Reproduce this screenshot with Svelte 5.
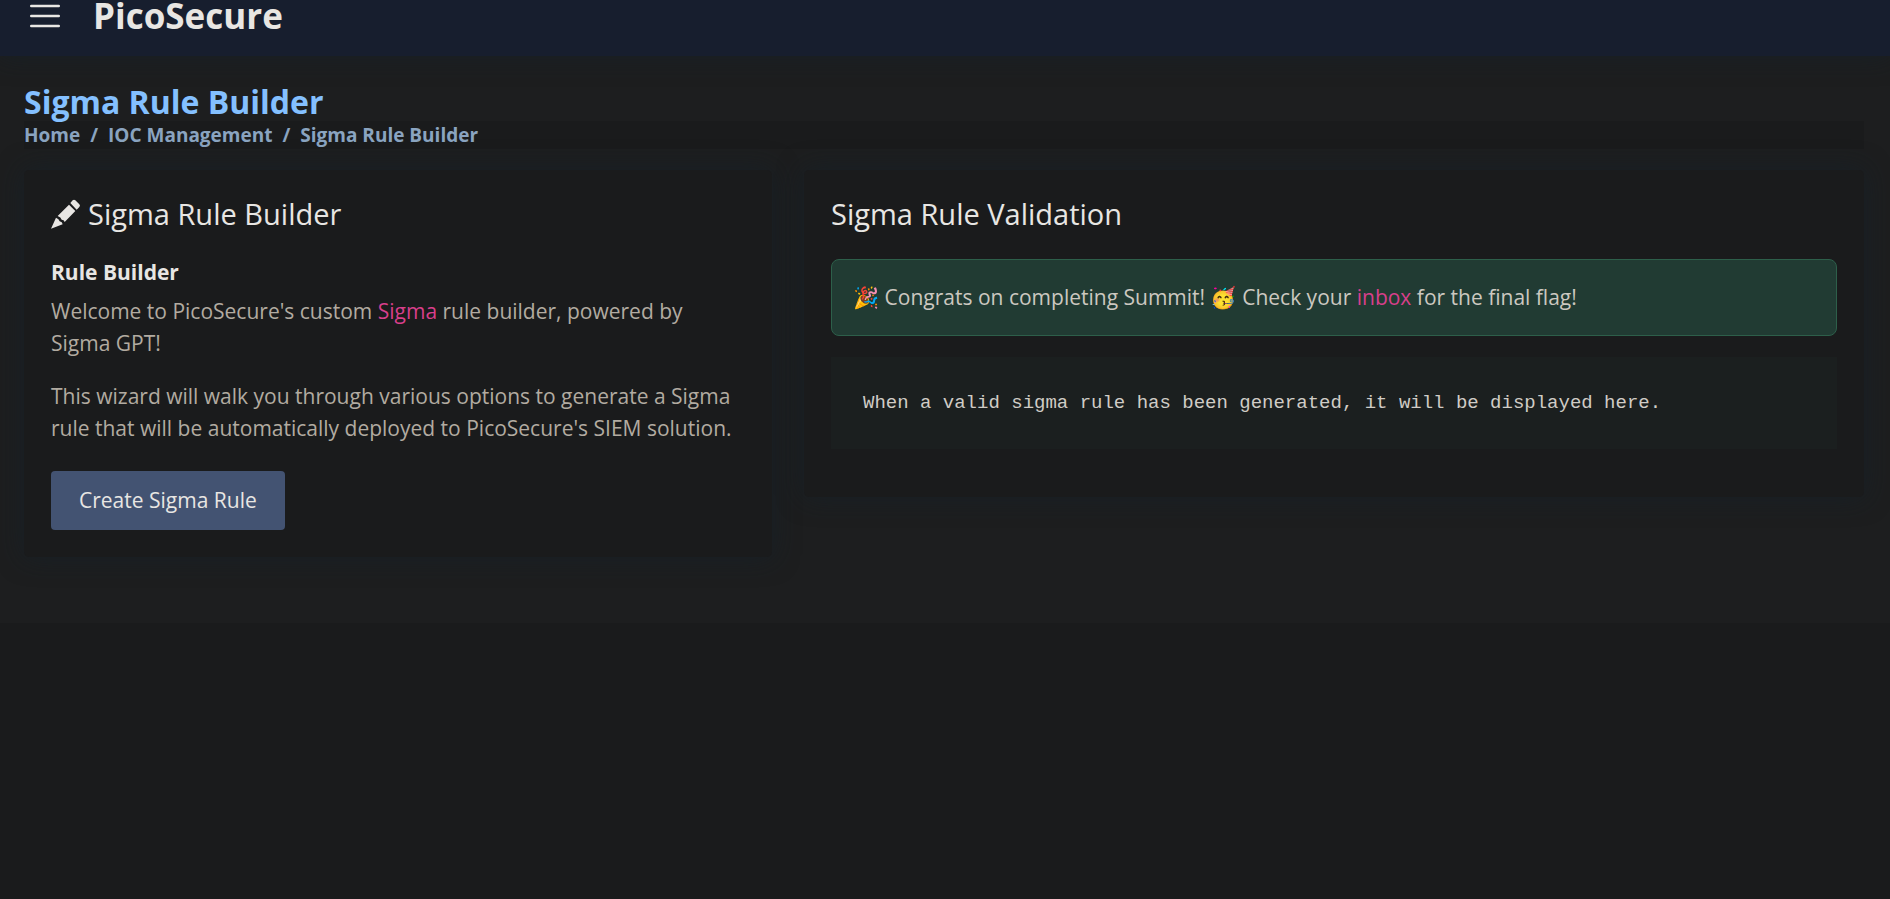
<script>
  const crumbs = ['Home', 'IOC Management', 'Sigma Rule Builder'];
</script>

<header>
  <button class="menu" aria-label="Toggle navigation">
    <svg viewBox="0 0 16 16" fill="none" stroke="currentColor" stroke-linecap="round">
      <path d="M2.5 4h11M2.5 8h11M2.5 12h11" />
    </svg>
  </button>
  <a class="brand" href="#home">PicoSecure</a>
</header>

<main>
  <h1>Sigma Rule Builder</h1>
  <nav aria-label="Breadcrumb">
    <ol>
      {#each crumbs as crumb}
        <li><a href="#{crumb}">{crumb}</a></li>
      {/each}
    </ol>
  </nav>

  <div class="row">
    <section class="card builder">
      <h2>
        <svg viewBox="2 0 90 90" fill="currentColor" aria-hidden="true">
          <path d="M67 4q4-4 8 0l12 12q4 4 0 8l-8 8L60 12z" />
          <path d="M56 17L75 36L43 69Q41 62 34 62Q32 54 22 51z" />
          <path d="M17 56Q26 59 28 67Q36 68 37 76L2 89z" />
        </svg>
        Sigma Rule Builder
      </h2>
      <h3>Rule Builder</h3>
      <p>Welcome to PicoSecure's custom <a href="#sigma">Sigma</a> rule builder, powered by Sigma GPT!</p>
      <p>This wizard will walk you through various options to generate a Sigma rule that will be automatically deployed to PicoSecure's SIEM solution.</p>
      <button class="create">Create Sigma Rule</button>
    </section>

    <section class="card validation">
      <h2>Sigma Rule Validation</h2>
      <div class="alert" role="status">
        🎉 Congrats on completing Summit! 🥳 Check your <a href="#inbox">inbox</a> for the final flag!
      </div>
      <pre>When a valid sigma rule has been generated, it will be displayed here.</pre>
    </section>
  </div>
</main>

<style>
  :global(body) {
    background: #1a1b1c;
    color: #b2aba1;
    font: 21px/32px "Open Sans", "Noto Color Emoji", sans-serif;
  }
  h1, h2, h3, p, ol, pre {
    margin: 0;
    padding: 0;
  }
  a {
    color: #d83f8b;
    text-decoration: none;
  }
  button {
    border: 0;
    font: inherit;
    cursor: pointer;
  }
  header {
    position: relative;
    display: flex;
    align-items: center;
    gap: 28px;
    height: 32px;
    padding: 0 25px 24px;
    background: #171e2e;
    box-shadow: 0 0 26px rgba(20, 34, 44, 0.6);
  }
  .menu {
    display: flex;
    padding: 0;
    background: none;
    color: #e8e6e3;
  }
  .menu svg {
    width: 40px;
    height: 40px;
  }
  .brand {
    color: #e8e6e3;
    font-size: 35px;
    font-weight: 700;
    line-height: 32px;
  }
  main {
    padding: 26px 26px 66px 24px;
    background: #1d1e1f;
  }
  h1 {
    color: #84c0ff;
    font-size: 32px;
    font-weight: 700;
    line-height: 39px;
  }
  ol {
    display: flex;
    list-style: none;
    background: #1a1b1c;
    font-size: 19px;
    font-weight: 700;
    line-height: 28px;
  }
  li, li a {
    color: #8aa4c0;
  }
  li + li::before {
    content: "/";
    padding: 0 10px;
  }
  .row {
    display: grid;
    grid-template-columns: repeat(12, minmax(0, 1fr));
    gap: 32px;
    align-items: start;
    margin-top: 21px;
  }
  .card {
    padding: 27px;
    border-radius: 5px;
    background: #1a1b1c;
    box-shadow: 0 0 26px rgba(20, 34, 44, 0.6);
  }
  .builder {
    grid-column: span 5;
  }
  .validation {
    grid-column: span 7;
  }
  h2 {
    display: flex;
    align-items: center;
    gap: 7px;
    margin-bottom: 28px;
    color: #e8e6e3;
    font-size: 29px;
    font-weight: 400;
    line-height: 34px;
  }
  h2 svg {
    width: 30px;
    height: 30px;
  }
  h3 {
    margin-bottom: 9px;
    color: #e8e6e3;
    font-size: 21px;
    font-weight: 700;
    line-height: 27px;
  }
  p + p {
    margin-top: 21px;
  }
  .create {
    display: block;
    margin-top: 27px;
    padding: 0 28px;
    border-radius: 4px;
    background: #435372;
    color: #e8e6e3;
    line-height: 59px;
  }
  .alert {
    padding: 21px 21px 22px;
    border: 1px solid #2d5f4a;
    border-radius: 8px;
    background: #213b33;
    color: #ccc8c0;
  }
  pre {
    margin: 21px 0;
    padding: 32px;
    overflow: auto;
    background: #1b1f1f;
    color: #d0ccc6;
    font: 19px/28px "Liberation Mono", monospace;
  }
</style>
